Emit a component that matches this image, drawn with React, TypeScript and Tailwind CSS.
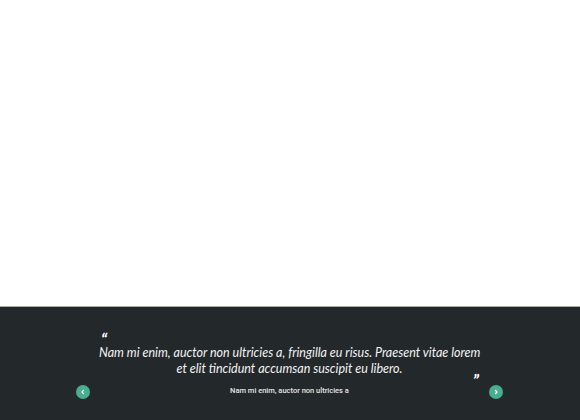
export default function App() {
  return (
    <div className="w-[580px] h-[420px] bg-white flex flex-col overflow-hidden" style={{ fontFamily: 'Lato, "Liberation Sans", sans-serif' }}>
      <div className="h-[306px] shrink-0" />
      <section className="flex-1 bg-[#23282b] border-t border-[#a9a9a9] flex px-[76px] pt-[23px]">
        <div className="w-[14px] shrink-0 flex flex-col justify-end pb-[21px]">
          <button className="w-[14px] h-[14px] rounded-full bg-[#48ae8e] text-white flex items-center justify-center">
            <svg width="6" height="6" viewBox="0 0 6 6" fill="none" stroke="white" strokeWidth="1.3">
              <path d="M3.8 1 L2 3 L3.8 5" />
            </svg>
          </button>
        </div>
        <div className="w-[399px] shrink-0 flex flex-col px-[9px] text-white">
          <div className="h-[15px] pl-[2px] pt-[4px]">
            <span className="block italic text-[17px] leading-[11px] h-[11px] font-bold">“</span>
          </div>
          <p className="italic text-[12.5px] leading-[16px] text-center text-[#f3f3f3] whitespace-nowrap">
            Nam mi enim, auctor non ultricies a, fringilla eu risus. Praesent vitae lorem
            <br />
            et elit tincidunt accumsan suscipit eu libero.
          </p>
          <div className="italic text-[17px] leading-[14px] h-[10px] text-right pr-[1px] -mt-[3px] font-bold">”</div>
          <div className="text-[7.5px] leading-[10px] text-center text-[#e6e6e6] mt-[2px] font-medium" style={{ fontFamily: 'Roboto, sans-serif' }}>Nam mi enim, auctor non ultricies a</div>
        </div>
        <div className="w-[14px] shrink-0 flex flex-col justify-end pb-[21px]">
          <button className="w-[14px] h-[14px] rounded-full bg-[#48ae8e] text-white flex items-center justify-center">
            <svg width="6" height="6" viewBox="0 0 6 6" fill="none" stroke="white" strokeWidth="1.3">
              <path d="M2.2 1 L4 3 L2.2 5" />
            </svg>
          </button>
        </div>
      </section>
    </div>
  );
}
